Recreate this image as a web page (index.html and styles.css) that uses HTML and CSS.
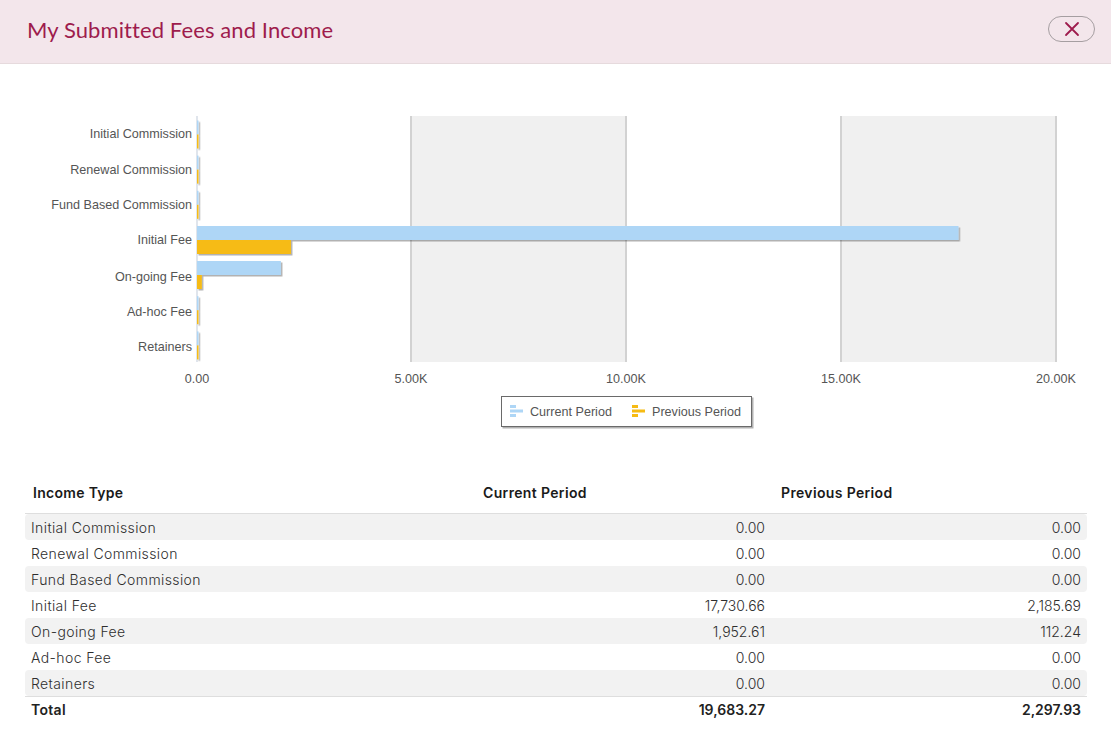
FILE: index.html
```html
<!DOCTYPE html>
<html>
<head>
<meta charset="utf-8">
<link rel="stylesheet" href="styles.css">
</head>
<body>
<div class="modal">
  <header class="modal-header">
    <h1 class="modal-title">My Submitted Fees and Income</h1>
    <button class="close-btn" aria-label="Close">
      <svg width="16" height="16" viewBox="0 0 16 16"><path d="M2 2 L14 14 M14 2 L2 14" stroke="#9e1c4d" stroke-width="1.8" stroke-linecap="round" fill="none"/></svg>
    </button>
  </header>

  <section class="chart">
    <svg class="chart-svg" width="1111" height="406" viewBox="0 64 1111 406">
      <defs>
        <filter id="sh" x="-5%" y="-20%" width="110%" height="160%">
          <feDropShadow dx="1.5" dy="1.5" stdDeviation="0.6" flood-color="#000" flood-opacity="0.3"/>
        </filter>
      </defs>
      <!-- bands -->
      <rect x="411" y="116" width="215" height="246" fill="#f0f0f0"/>
      <rect x="841" y="116" width="215" height="246" fill="#f0f0f0"/>
      <!-- gridlines -->
      <g stroke="#d2d2d2" stroke-width="2">
        <line x1="411" y1="116" x2="411" y2="362"/>
        <line x1="626" y1="116" x2="626" y2="362"/>
        <line x1="841" y1="116" x2="841" y2="362"/>
        <line x1="1056" y1="116" x2="1056" y2="362"/>
      </g>
      <line x1="197" y1="116" x2="197" y2="362" stroke="#d6dde6" stroke-width="1.5"/>

      <!-- category labels -->
      <g class="cat" text-anchor="end">
        <text x="192" y="137.5">Initial Commission</text>
        <text x="192" y="173.5">Renewal Commission</text>
        <text x="192" y="208.5">Fund Based Commission</text>
        <text x="192" y="243.5">Initial Fee</text>
        <text x="192" y="280.5">On-going Fee</text>
        <text x="192" y="315.5">Ad-hoc Fee</text>
        <text x="192" y="350.5">Retainers</text>
      </g>

      <!-- bars -->
      <g filter="url(#sh)">
        <rect x="197" y="120.5" width="1.5" height="14" fill="#aed6f6"/>
        <rect x="197" y="134.5" width="1.5" height="14" fill="#f6bb13"/>
        <rect x="197" y="155.6" width="1.5" height="14" fill="#aed6f6"/>
        <rect x="197" y="169.6" width="1.5" height="14" fill="#f6bb13"/>
        <rect x="197" y="190.8" width="1.5" height="14" fill="#aed6f6"/>
        <rect x="197" y="204.8" width="1.5" height="14" fill="#f6bb13"/>
        <rect x="197" y="226" width="761.5" height="14" fill="#aed6f6"/>
        <rect x="197" y="240" width="93.9" height="14" fill="#f6bb13"/>
        <rect x="197" y="261" width="83.9" height="14" fill="#aed6f6"/>
        <rect x="197" y="275" width="4.8" height="14" fill="#f6bb13"/>
        <rect x="197" y="296.2" width="1.5" height="14" fill="#aed6f6"/>
        <rect x="197" y="310.2" width="1.5" height="14" fill="#f6bb13"/>
        <rect x="197" y="331.4" width="1.5" height="14" fill="#aed6f6"/>
        <rect x="197" y="345.4" width="1.5" height="14" fill="#f6bb13"/>
      </g>

      <!-- axis labels -->
      <g class="axis" text-anchor="middle">
        <text x="197" y="382.5">0.00</text>
        <text x="411" y="382.5">5.00K</text>
        <text x="626" y="382.5">10.00K</text>
        <text x="841" y="382.5">15.00K</text>
        <text x="1056" y="382.5">20.00K</text>
      </g>

      <!-- legend -->
      <rect x="501.5" y="396.5" width="250" height="30" fill="#fff" stroke="#6a6a6a" stroke-width="1" filter="url(#sh)"/>
      <g fill="#aed6f6">
        <rect x="510" y="405" width="6" height="3"/>
        <rect x="510" y="409.5" width="13" height="3"/>
        <rect x="510" y="414" width="6" height="3"/>
      </g>
      <g fill="#f6bb13">
        <rect x="632" y="405" width="6" height="3"/>
        <rect x="632" y="409.5" width="13" height="3"/>
        <rect x="632" y="414" width="6" height="3"/>
      </g>
      <text class="legend-text" x="530" y="415.5">Current Period</text>
      <text class="legend-text" x="652" y="415.5">Previous Period</text>
    </svg>
  </section>

  <section class="table">
    <div class="row head">
      <div class="cell name">Income Type</div>
      <div class="cell hcol">Current Period</div>
      <div class="cell hcol">Previous Period</div>
    </div>
    <div class="row alt">
      <div class="cell name">Initial Commission</div>
      <div class="cell num">0.00</div>
      <div class="cell num last">0.00</div>
    </div>
    <div class="row">
      <div class="cell name">Renewal Commission</div>
      <div class="cell num">0.00</div>
      <div class="cell num last">0.00</div>
    </div>
    <div class="row alt">
      <div class="cell name">Fund Based Commission</div>
      <div class="cell num">0.00</div>
      <div class="cell num last">0.00</div>
    </div>
    <div class="row">
      <div class="cell name">Initial Fee</div>
      <div class="cell num">17,730.66</div>
      <div class="cell num last">2,185.69</div>
    </div>
    <div class="row alt">
      <div class="cell name">On-going Fee</div>
      <div class="cell num">1,952.61</div>
      <div class="cell num last">112.24</div>
    </div>
    <div class="row">
      <div class="cell name">Ad-hoc Fee</div>
      <div class="cell num">0.00</div>
      <div class="cell num last">0.00</div>
    </div>
    <div class="row alt">
      <div class="cell name">Retainers</div>
      <div class="cell num">0.00</div>
      <div class="cell num last">0.00</div>
    </div>
    <div class="row total">
      <div class="cell name">Total</div>
      <div class="cell num">19,683.27</div>
      <div class="cell num last">2,297.93</div>
    </div>
  </section>
</div>
</body>
</html>
```

FILE: styles.css
```css
html, body {
  margin: 0;
  padding: 0;
  background: #ffffff;
}

body {
  font-family: Inter, "Noto Sans", sans-serif;
  color: #333333;
}

.modal {
  width: 1111px;
}

.modal-header {
  height: 63px;
  border-bottom: 1px solid #e6dadd;
  background: #f3e6eb;
  display: flex;
  align-items: center;
  justify-content: space-between;
  padding: 0 16px 0 27px;
  box-sizing: content-box;
}

.modal-title {
  margin: 0 0 5px 0;
  font-family: Lato, Inter, sans-serif;
  font-weight: 400;
  font-size: 22px;
  color: #9e1c4d;
  letter-spacing: 0.1px;
}

.close-btn {
  width: 47px;
  height: 26px;
  border: 1px solid #a59ea1;
  border-radius: 13px;
  background: transparent;
  display: flex;
  align-items: center;
  justify-content: center;
  padding: 0;
  margin-bottom: 6px;
  cursor: pointer;
}

.chart {
  height: 406px;
}

.chart-svg {
  display: block;
}

.chart-svg text {
  font-family: "Liberation Sans", Arial, sans-serif;
  font-size: 12.6px;
  fill: #555555;
}

.table {
  padding: 0 24px 0 25px;
  font-size: 14px;
}

.row {
  display: grid;
  grid-template-columns: 450px 298px 314px;
  height: 26px;
  align-items: center;
  border-radius: 4px;
  font-weight: 300;
  color: #2e2e2e;
}

.row.alt {
  background: #f2f2f2;
}

.row.head {
  height: 42px;
  padding-top: 1px;
  border-bottom: 1px solid #dedede;
  border-radius: 0;
  font-weight: 600;
  color: #1a1a1a;
  letter-spacing: 0.35px;
}

.row.head .cell {
  padding-left: 8px;
}

.row.total {
  border-top: 1px solid #dedede;
  border-radius: 0;
  height: 25px;
  font-weight: 600;
  color: #222222;
}

.cell {
  white-space: nowrap;
}

.cell.name {
  padding-left: 6px;
  letter-spacing: 0.4px;
}

.row.head .cell.name,
.row.total .cell.name {
  letter-spacing: 0.3px;
}

.cell.num {
  text-align: right;
  padding-right: 8px;
}

.cell.num.last {
  padding-right: 6px;
}
```
